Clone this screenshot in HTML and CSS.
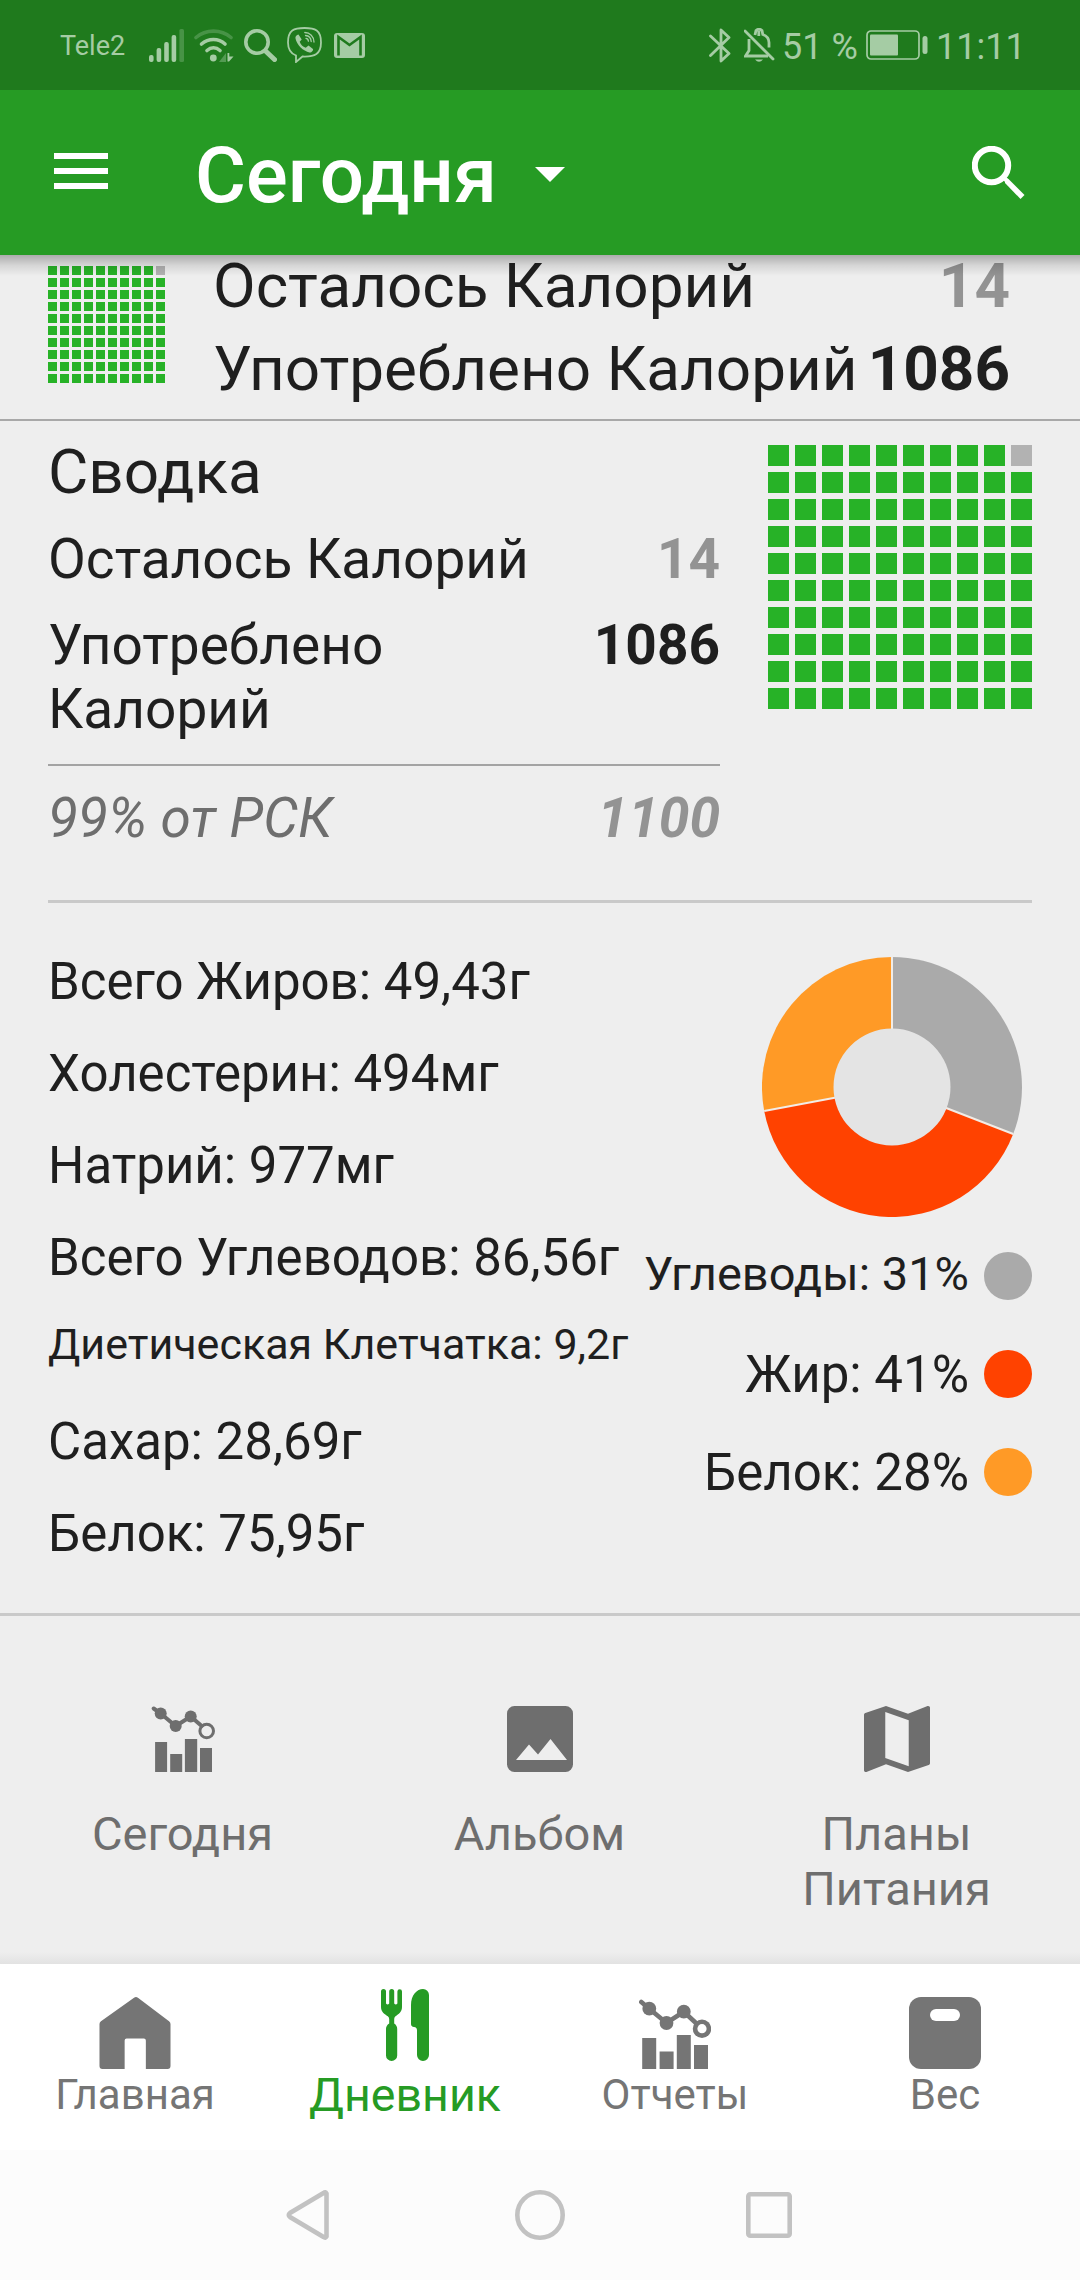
FILE: index.html
```html
<!DOCTYPE html>
<html lang="ru">
<head>
  <meta charset="UTF-8" />
  <meta name="viewport" content="width=device-width, initial-scale=1.0"/>
  <title>Сегодня</title>
  <link rel="stylesheet" href="styles.css">
</head>
<body>
  <div class="status-bar">
    <span class="carrier">Tele2</span>
    <div class="status-icons">
      <svg width="35" height="33" viewBox="0 0 35 33" fill="currentColor">
        <rect x="0" y="26" width="4.6" height="7" rx="2"/>
        <rect x="7.6" y="19" width="4.6" height="14" rx="2"/>
        <rect x="15.2" y="13" width="4.6" height="20" rx="2"/>
        <rect x="22.6" y="6" width="4.6" height="27" rx="2"/>
        <rect x="30.4" y="0" width="4.6" height="33" rx="1.5" opacity="0.3"/>
      </svg>
      <svg width="40" height="33" viewBox="0 0 40 33" fill="none" stroke="currentColor" stroke-width="3.6" stroke-linecap="round">
        <path d="M2 8.5C12 0 27 0 37 8.5" opacity="0.3"/>
        <path d="M7.5 15c7-6 17-6 23.5 0M13 21.5c4-3.5 9-3.5 13 0"/>
        <circle cx="19.3" cy="29" r="3.4" fill="currentColor" stroke="none"/>
        <path d="M32 24v9h-7z" fill="currentColor" stroke="none" opacity="0.4"/>
        <path d="M33.5 24h1.8v3.5H39.5L35 32.500h-1.500z" fill="currentColor" stroke="none"/>
      </svg>
      <svg width="33" height="33" viewBox="0 0 33 33" fill="none" stroke="currentColor">
        <circle cx="13" cy="13" r="11.2" stroke-width="3.6"/>
        <path d="M21.5 22L30.5 30.5" stroke-width="5" stroke-linecap="round"/>
      </svg>
      <svg class="viber" width="35" height="36" viewBox="0 0 35 36" fill="none" stroke="currentColor" stroke-width="1.8">
        <path d="M17.5 1C7 1 1 3 1 15.5c0 7 2.5 11 8 13V35l6.500-5.500C28 30 34 27 34 15.500 34 3 28 1 17.500 1z"/>
        <path d="M11.500 7.500c-2 .5-3.500 2-3 4 1.500 6.500 7.500 12.500 14 14 2 .3 4-2 3.500-3.500l-4.500-3.500-2.800 2.200c-3-1-5-3-6-6l2-2.200z" fill="currentColor" stroke="none"/>
        <path d="M17.800 5.500c5 0 9.200 4 9.200 9.500M18.500 8.500c3.300.3 5.500 2.500 5.700 6M19 11.400c1.500.2 2.300 1.200 2.400 2.800" stroke-width="1.3" stroke-linecap="round"/>
      </svg>
      <svg class="mail" width="31" height="25" viewBox="0 0 31 25">
        <rect width="31" height="25" rx="3" fill="currentColor"/>
        <path d="M4.500 22.500V4L15.500 12 26.500 4V22.500" fill="none" stroke="#1f7a1d" stroke-width="2.6"/>
      </svg>
    </div>
    <div class="status-right">
      <svg width="22" height="35" viewBox="0 0 22 35" fill="none" stroke="currentColor" stroke-width="2.8">
        <path d="M1.500 8L20 25.500 12 33V2l8 7.500L1.500 27.500" stroke-linejoin="round" stroke-linecap="round"/>
      </svg>
      <svg class="bell" width="31" height="35" viewBox="0 0 31 35" fill="none" stroke="currentColor" stroke-width="2.8">
        <path d="M5 11v11.500L1.500 28H24M11 7l1-4.500q3-2.500 6 0l.8 4q6 2 6.200 8V19.500M14.800 3v5"/>
        <path d="M1 3L29 31" stroke-linecap="round"/>
        <path d="M11 31.500h8q-4 4.500-8 0z" fill="currentColor" stroke="none"/>
      </svg>
      <span class="percent">51 %</span>
      <svg class="battery" width="62" height="30" viewBox="0 0 62 30">
        <rect x="1" y="1" width="52" height="28" rx="4" fill="none" stroke="currentColor" stroke-width="1.7"/>
        <rect x="4" y="4.5" width="28" height="21" rx="1" fill="currentColor"/>
        <rect x="56.5" y="6" width="5" height="18" rx="2.5" fill="currentColor"/>
      </svg>
      <span class="clock">11:11</span>
    </div>
  </div>

  <header class="app-bar">
    <svg class="menu" width="54" height="36" viewBox="0 0 54 36" fill="#fff">
      <rect width="54" height="6"/>
      <rect y="15" width="54" height="6"/>
      <rect y="30" width="54" height="6"/>
    </svg>
    <h1>Сегодня</h1>
    <svg class="caret" width="30" height="15" viewBox="0 0 30 15"><path d="M0 0h30L15 15z" fill="#fff"/></svg>
    <svg class="search" width="54" height="54" viewBox="0 0 54 54" fill="none" stroke="#fff">
      <circle cx="19.5" cy="19.5" r="16.7" stroke-width="6"/>
      <path d="M33 31L36.500 33 52.500 49 48.500 53 33 37z" fill="#fff" stroke="none"/>
      <path d="M30 30l5 5" stroke-width="4"/>
    </svg>
  </header>

  <section class="top-summary">
    <div class="grid grid-small"></div>
    <div class="top-rows">
      <div class="row"><span>Осталось Калорий</span><b class="muted">14</b></div>
      <div class="row"><span>Употреблено Калорий</span><b>1086</b></div>
    </div>
  </section>

  <section class="summary">
    <div class="summary-rows">
      <h2>Сводка</h2>
      <div class="row left"><span>Осталось Калорий</span><b class="muted">14</b></div>
      <div class="row eaten"><span>Употреблено Калорий</span><b>1086</b></div>
      <div class="row total"><span>99% от РСК</span><b class="muted">1100</b></div>
    </div>
    <div class="grid grid-large"></div>
  </section>

  <section class="nutrition">
    <ul class="nutrients">
      <li>Всего Жиров: 49,43г</li>
      <li>Холестерин: 494мг</li>
      <li>Натрий: 977мг</li>
      <li>Всего Углеводов: 86,56г</li>
      <li class="small">Диетическая Клетчатка: 9,2г</li>
      <li>Сахар: 28,69г</li>
      <li>Белок: 75,95г</li>
    </ul>
    <div class="macros">
      <svg class="donut" width="260" height="260" viewBox="-130 -130 260 260">
        <path d="M0 0V-130A130 130 0 0 1 121.200 47z" fill="#aaa"/>
        <path d="M0 0L121.200 47A130 130 0 0 1-127.800 24z" fill="#ff4200"/>
        <path d="M0 0L-127.800 24A130 130 0 0 1 0-130z" fill="#ff9a26"/>
        <path d="M0 0V-130M0 0L121.200 47M0 0L-127.800 24" stroke="#f2ece6" stroke-width="2"/>
        <circle r="58.5" fill="#e4e4e4"/>
      </svg>
      <div class="legend carbs"><span>Углеводы: 31%</span><i class="dot"></i></div>
      <div class="legend fat"><span>Жир: 41%</span><i class="dot"></i></div>
      <div class="legend protein"><span>Белок: 28%</span><i class="dot"></i></div>
    </div>
  </section>

  <section class="actions">
    <div class="action">
      <svg width="66" height="66" viewBox="-1.7 0 66 66" fill="currentColor">
        <path d="M2 2.500L9 7.500 24 20 39 10.500 50 20" fill="none" stroke="currentColor" stroke-width="4" stroke-linecap="round"/>
        <circle cx="9" cy="7.5" r="6"/><circle cx="24" cy="20" r="6"/><circle cx="39" cy="10.5" r="6"/>
        <circle cx="55" cy="25" r="6.8" fill="none" stroke="currentColor" stroke-width="3"/>
        <path d="M3.400 36h12v30h-12zM18.500 48h12v18h-12zM33.200 33h12.300v33H33.200zM48.300 42h12v24h-12z"/>
      </svg>
      <span>Сегодня</span>
    </div>
    <div class="action">
      <svg width="66" height="66" viewBox="0 0 66 66">
        <rect width="66" height="66" rx="7.5" fill="currentColor"/>
        <path d="M9 54L22 38.500 31 48.500 43.500 33 60 54z" fill="#eee"/>
      </svg>
      <span>Альбом</span>
    </div>
    <div class="action">
      <svg width="66" height="66" viewBox="3 3 18 18" fill="currentColor">
        <path d="M20.5 3l-.16.03L15 5.1 9 3 3.360 4.900c-.21.07-.36.25-.36.48V20.500c0 .28.22.5.5.5l.16-.03L9 18.900l6 2.100 5.640-1.900c.21-.07.36-.25.36-.48V3.500c0-.28-.22-.5-.5-.5zM15.200 19.400l-6.400-2.200V4.650l6.400 2.250z"/>
      </svg>
      <span>Планы Питания</span>
    </div>
  </section>

  <nav class="tabs">
    <a class="tab">
      <svg width="72" height="72" viewBox="0 0 72 73" fill="currentColor">
        <path d="M35 .7q2-1.400 4 0L70.500 24.500Q72 25.500 72 27.500V70q0 3-3 3H47V44q0-2-2-2H27.500q-2 0-2 2V73H3q-3 0-3-3V27.500Q0 25.500 1.500 24.500z"/>
      </svg>
      <span>Главная</span>
    </a>
    <a class="tab active">
      <svg width="48" height="72" viewBox="0 0 48 72" fill="currentColor">
        <path d="M0 2.500a2.500 2.500 0 0 1 5 0V14.500q1.600 2.200 3.200 0V2.500a2.500 2.500 0 0 1 5 0V14.500q1.600 2.200 3.200 0V2.500a2.300 2.300 0 0 1 4.600 0V18c0 5-3.500 7-6.500 9.300Q13.200 28.500 13.200 30V34.500Q16.200 36.500 16.200 40V66.400a5.600 5.600 0 0 1-11.200 0V40Q5 36.500 8.200 34.500V30q0-1.500-1.400-2.700C3.500 25 0 23 0 18z"/>
        <path d="M42 0a6 6 0 0 1 6 6V66a6 6 0 0 1-12 0V41.500Q36 38.300 33 38 30 37.500 30 35V16C30 6 36 0 42 0z"/>
      </svg>
      <span>Дневник</span>
    </a>
    <a class="tab">
      <svg width="72" height="72" viewBox="0 0 72 72" fill="currentColor">
        <path d="M2.300 5L10.300 11.700 27.500 26 44.800 14.700 58 27" fill="none" stroke="currentColor" stroke-width="4.6" stroke-linecap="round"/>
        <circle cx="10.3" cy="11.7" r="6.9"/><circle cx="27.5" cy="26" r="6.9"/><circle cx="44.8" cy="14.7" r="6.9"/>
        <circle cx="63" cy="31.7" r="9.2"/>
        <circle cx="63" cy="31.7" r="4.6" fill="#fff"/>
        <path d="M3.200 41h14v31h-14zM20.600 54.500h14V72h-14zM37.800 38h14v34h-14zM55 48h14v24H55z"/>
      </svg>
      <span>Отчеты</span>
    </a>
    <a class="tab">
      <svg width="72" height="72" viewBox="0 0 72 72">
        <rect width="72" height="72" rx="12" fill="currentColor"/>
        <rect x="21" y="12" width="30" height="12" rx="6" fill="#fff"/>
      </svg>
      <span>Вес</span>
    </a>
  </nav>

  <div class="system-nav">
    <svg width="44" height="50" viewBox="0 0 44 50"><path d="M40.500 3.500V46.500Q39.500 48.500 37.500 47L4 27Q1.500 25 4 23L37.500 3Q39.500 1.500 40.500 3.500z"/></svg>
    <svg class="home" width="50" height="50" viewBox="0 0 50 50"><circle cx="25" cy="25" r="22.7"/></svg>
    <svg width="46" height="46" viewBox="0 0 46 46"><rect x="2.3" y="2.3" width="41.4" height="41.4" rx="2"/></svg>
  </div>

  <script>
    // one cell per percent of the daily norm, the first row ends with the remaining one
    document.querySelectorAll('.grid').forEach(function (grid) {
      for (let i = 0; i < 100; i++) {
        const cell = document.createElement('div');
        cell.className = i === 9 ? 'cell empty' : 'cell';
        grid.appendChild(cell);
      }
    });
  </script>
</body>
</html>
```

FILE: styles.css
```css
body {
  margin: 0;
  width: 1080px;
  height: 2280px;
  overflow: hidden;
  font-family: Roboto, sans-serif;
  background: #eee;
  color: #1f1f1f;
}

svg {
  display: block;
  flex: none;
}

/* status bar */
.status-bar {
  display: flex;
  align-items: center;
  box-sizing: border-box;
  height: 90px;
  padding: 0 60px;
  background: #1f7a1d;
  color: #a5cca4;
}

.carrier {
  width: 89px;
  padding-top: 2px;
  font-size: 27px;
}

.status-icons,
.status-right {
  display: flex;
  align-items: center;
  gap: 10px;
}

.mail {
  margin-left: 2px;
}

.status-right {
  margin-left: auto;
  gap: 0;
  font-size: 36px;
}

.bell {
  margin-left: 13px;
}

.percent {
  padding-top: 3px;
  margin-left: 7px;
  width: 84px;
  white-space: nowrap;
}

.clock {
  padding-top: 3px;
  width: 84px;
  margin-left: 8px;
}

/* app bar */
.app-bar {
  position: relative;
  z-index: 1;
  display: flex;
  align-items: center;
  box-sizing: border-box;
  height: 165px;
  padding: 0 54px;
  background: #269b24;
  color: #fff;
}

.app-bar::after {
  content: "";
  position: absolute;
  left: 0;
  right: 0;
  top: 100%;
  height: 21px;
  background: linear-gradient(rgba(0, 0, 0, 0.28), rgba(0, 0, 0, 0.1) 50%, transparent);
}

.menu {
  margin-bottom: 3px;
}

h1 {
  margin: 6px 0 0 87px;
  width: 340px;
  font-size: 78px;
  font-weight: 500;
}

.caret {
  margin-top: 4px;
}

.search {
  margin-left: auto;
}

/* calories */
.grid {
  display: grid;
  flex: none;
}

.grid-small {
  grid-template-columns: repeat(10, 9px);
  grid-auto-rows: 9px;
  gap: 3px;
  margin-top: 11px;
}

.grid-large {
  grid-template-columns: repeat(10, 21px);
  grid-auto-rows: 21px;
  gap: 6px;
  margin-top: 24px;
}

.cell {
  background: #27b227;
}

.empty {
  background: #b2b2b2;
}

.row {
  display: flex;
  justify-content: space-between;
}

.muted {
  color: #939393;
}

.top-summary {
  display: flex;
  align-items: flex-start;
  box-sizing: border-box;
  height: 166px;
  padding: 0 70px 0 48px;
  border-bottom: 2px solid #a8a8a8;
}

.top-rows {
  flex: 1;
  margin: -11px 0 0 48px;
  font-size: 62px;
  line-height: 83px;
  white-space: nowrap;
}

.summary {
  display: flex;
  align-items: flex-start;
  justify-content: space-between;
  box-sizing: border-box;
  height: 482px;
  margin: 0 48px;
  border-bottom: 3px solid #c9c9c9;
}

.summary-rows {
  width: 672px;
  padding-top: 15px;
  font-size: 55px;
  line-height: 64px;
}

h2 {
  margin: 0 0 19px;
  font-size: 62px;
  font-weight: 400;
  line-height: 72px;
}

.eaten {
  margin-top: 22px;
  padding-bottom: 23px;
  border-bottom: 2px solid #a3a3a3;
}

.eaten span {
  width: 500px;
}

.total {
  margin-top: 20px;
  font-style: italic;
  color: #6e6e6e;
}

/* nutrients */
.nutrition {
  display: flex;
  justify-content: space-between;
  box-sizing: border-box;
  height: 713px;
  padding: 33px 48px 0;
  border-bottom: 3px solid #c9c9c9;
}

.nutrients {
  margin: 0;
  padding: 0;
  list-style: none;
  font-size: 51px;
  line-height: 92px;
  white-space: nowrap;
}

.nutrients .small {
  padding-bottom: 11px;
  font-size: 43px;
  line-height: 81px;
}

.macros {
  display: flex;
  flex-direction: column;
  align-items: flex-end;
}

.donut {
  margin: 21px 10px 10px 0;
}

.legend {
  display: flex;
  align-items: center;
  height: 98px;
  font-size: 51px;
  white-space: nowrap;
}

.dot {
  width: 48px;
  height: 48px;
  margin-left: 15px;
  border-radius: 50%;
}

.carbs span {
  margin-top: -6px;
  font-size: 47px;
}

.carbs .dot {
  background: #aaa;
}

.fat .dot {
  background: #ff4200;
}

.protein .dot {
  background: #ff9a26;
}

/* actions */
.actions {
  display: flex;
  box-sizing: border-box;
  height: 348px;
  padding: 90px 5px 0 4px;
  color: #6e6e6e;
  background: linear-gradient(transparent 336px, #e2e2e2);
}

.action {
  flex: 1;
  display: flex;
  flex-direction: column;
  align-items: center;
  font-size: 47px;
  line-height: 55px;
  text-align: center;
}

.action span {
  margin-top: 34px;
  max-width: 220px;
}

/* bottom tabs */
.tabs {
  display: flex;
  height: 186px;
  background: #fff;
  color: #757575;
}

.tab {
  flex: 1;
  display: flex;
  flex-direction: column;
  align-items: center;
  padding-top: 33px;
  font-size: 42px;
  line-height: 50px;
}

.tab span {
  margin-top: 1px;
}

.active {
  padding-top: 25px;
  color: #269b24;
  font-size: 46.5px;
}

.active span {
  margin-top: 9px;
}

.system-nav {
  display: flex;
  align-items: center;
  justify-content: space-between;
  box-sizing: border-box;
  height: 130px;
  padding: 0 288px 0 286px;
  background: #fcfcfc;
}

.system-nav svg {
  fill: none;
  stroke: #c2c2c2;
  stroke-width: 4.6;
}

.system-nav .home {
  margin-left: 4px;
}
```
